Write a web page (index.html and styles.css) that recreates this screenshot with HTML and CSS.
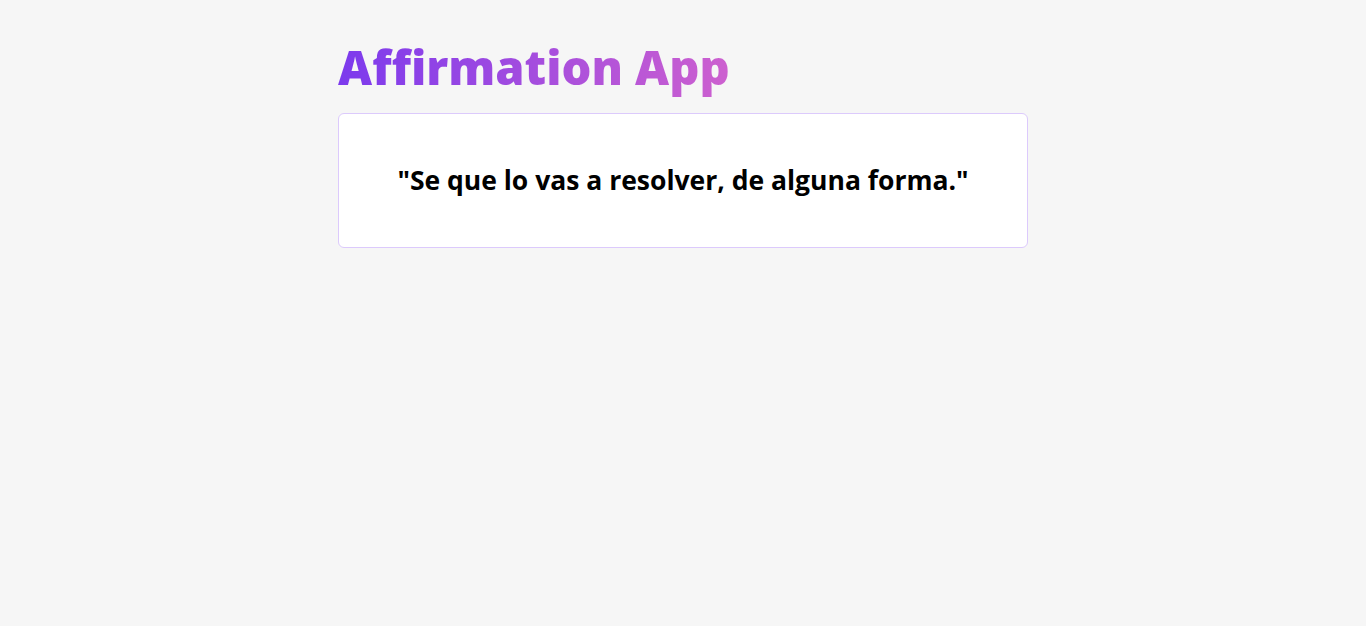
FILE: index.html
```html
<!DOCTYPE html>
<html lang="es">
<head>
    <meta charset="UTF-8">
    <meta name="viewport" content="width=device-width, initial-scale=1.0">
    <title>Affirmation App</title>
    <link rel="stylesheet" href="styles.css">
</head>
<body>
    <main class="app">
        <h1 class="app-title">Affirmation App</h1>

        <div class="affirmation-card">
            <p class="affirmation-text">"Se que lo vas a resolver, de alguna forma."</p>
        </div>
    </main>
</body>
</html>
```

FILE: styles.css
```css
body {
    margin: 0;
    padding: 0;
    min-height: 100vh;
    background: #f6f6f6;
    font-family: "Open Sans", "Noto Sans", Arial, sans-serif;
    color: #000;
}

.app {
    max-width: 690px;
    margin: 0 auto;
    padding-top: 33px;
}

.app-title {
    display: inline-block;
    margin: 0 0 12px 0;
    font-size: 47px;
    line-height: 68px;
    font-weight: 800;
    background: linear-gradient(90deg, #7c3aed, #cd60cf);
    -webkit-background-clip: text;
    background-clip: text;
    color: transparent;
}

.affirmation-card {
    background: #fff;
    border: 1px solid #dccafc;
    border-radius: 6px;
    padding: 48px 24px;
    text-align: center;
}

.affirmation-text {
    margin: 0;
    font-size: 26.5px;
    line-height: 37px;
    font-weight: 700;
}
```
